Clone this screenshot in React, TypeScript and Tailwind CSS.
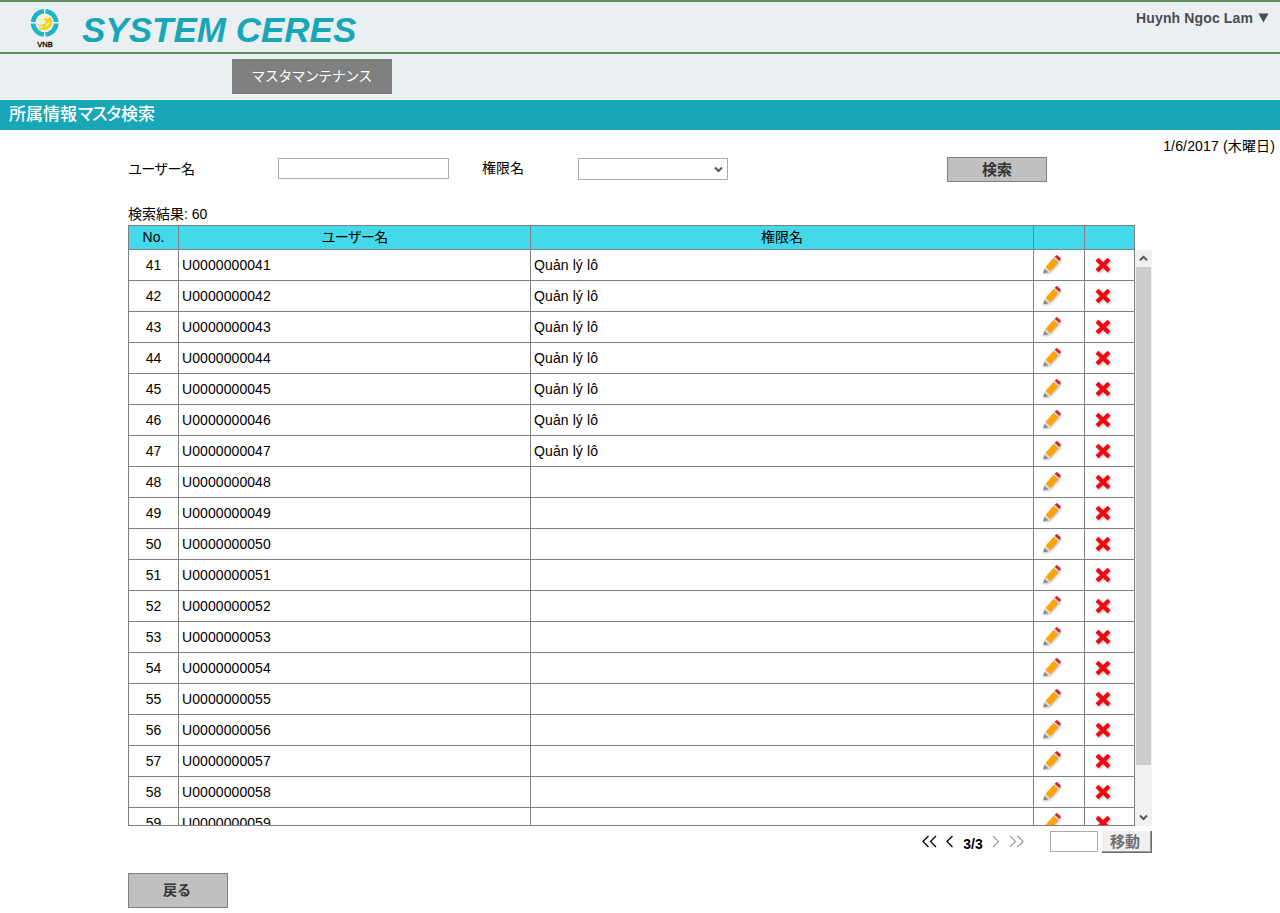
import React from "react";

const roleRows = 7;
const rows = Array.from({ length: 19 }, (_, i) => ({
  no: 41 + i,
  user: `U00000000${41 + i}`,
  role: i < roleRows ? "Quản lý lô" : "",
}));

const columns = "grid grid-cols-[51px_352px_503px_51px_50px]";

function Logo() {
  return (
    <svg width="32" height="42" viewBox="0 0 32 42" className="block">
      <circle cx="15.7" cy="15.8" r="11.6" fill="none" stroke="#1cb7c6" strokeWidth="4.6" />
      <path d="M15.7 1v6M15.7 25v6M1 15.8h6M25 15.8h6" stroke="#eaf6f8" strokeWidth="1.5" />
      <path d="M8 15c-.5-4 3-8 7-8 3 0 5 1 6.500 3l-2 1-3-1-2 4-3 2c-2 0-3-.5-3.500-1z" fill="#fdf6c4" />
      <path d="M7.500 16.500c2 1.500 4 1.500 6 1 2.500-.3 4-2 3-4.200l-2-.6 1.600-1.600 3 .8 1.500-2.200c2.500 2 3.400 5.500 2 8.600-1.300 3-4.500 4.800-8 4.700-3 0-5-1.200-6-3 2.500 1.300 5 1.200 6.500 0-3 0-6-1-7.600-3.500z" fill="#f2d51d" />
      <path d="M17.500 17.500c1-1 2-1.500 3-3-.2 3-2 5-5 5.500z" fill="#fdf6c4" />
      <text x="16" y="40" textAnchor="middle" fontSize="8" fontWeight="400" stroke="#000" strokeWidth="0.3" textLength="15.5" lengthAdjust="spacingAndGlyphs" fontFamily="Liberation Sans, sans-serif">VNB</text>
    </svg>
  );
}

function Pencil() {
  return (
    <svg width="22" height="22" viewBox="0 0 22 22" className="block drop-shadow-[1px_1px_1px_rgba(0,0,0,0.25)]">
      <path d="M2 19.600 3.500 14.400 7.500 18.200z" fill="#8e8983" />
      <path d="M3.500 14.500 4.600 12.700 9.300 17.200 7.500 18.300z" fill="#e0ddda" />
      <path d="M4.600 12.800 12.600 3.800 17.500 8.300 9.300 17.300z" fill="#ffa30b" />
      <path d="M12.600 3.800 13.700 2.600 18.500 7.100 17.500 8.300z" fill="#e3d5d2" />
      <path d="M13.700 2.700 15 1.400Q15.700 .8 16.500 1.500L19.300 4.100Q20 4.800 19.400 5.600L18.400 7.100z" fill="#d3242f" />
    </svg>
  );
}

function Cross() {
  return (
    <svg width="20" height="20" viewBox="0 0 20 20" className="block drop-shadow-[1px_1px_1px_rgba(0,0,0,0.3)]">
      <path d="M4 4.200 16 15.800M16 4.200 4 15.800" stroke="#ef0711" strokeWidth="4.200" />
    </svg>
  );
}

function Chevron({ up = false }: { up?: boolean }) {
  return (
    <svg width="9" height="7" viewBox="0 0 9 7" className="block">
      <path d={up ? "M1 5.3 4.5 1.8 8 5.3" : "M1 1.5 4.5 5 8 1.5"} fill="none" stroke="#555" strokeWidth="2" />
    </svg>
  );
}

function Arrow({ double = false, right = false, muted = false }: { double?: boolean; right?: boolean; muted?: boolean }) {
  const single = right ? "M1 1 6.5 6.5 1 12" : "M6.5 1 1 6.5 6.5 12";
  const second = right ? "M8.5 1 14 6.5 8.5 12" : "M14 1 8.5 6.5 14 12";
  return (
    <svg width={double ? 16 : 8} height="13" viewBox={double ? "0 0 16 13" : "0 0 8 13"} className="block">
      <path d={double ? single + second : single} fill="none" stroke={muted ? "#a0a0a0" : "#000"} strokeWidth="1.3" />
    </svg>
  );
}

export default function App() {
  return (
    <div className="h-[913px] w-[1280px] overflow-hidden bg-white font-['Liberation_Sans','Noto_Sans_CJK_JP',sans-serif] text-[14px] leading-[20px] text-black">
      <header className="flex h-[54px] justify-between border-y-2 border-[#648c5a] bg-[#eaeff2]">
        <div className="flex">
          <div className="ml-[29px] mt-[5px] w-[53px]">
            <Logo />
          </div>
          <h1 className="mt-[8px] whitespace-nowrap text-[35px] font-bold italic leading-[40px] text-[#19a6b7]">SYSTEM CERES</h1>
        </div>
        <div className="mr-[11px] mt-[6px] flex text-[#4c4c4c]">
          <span className="whitespace-nowrap font-bold tracking-[0.13px]">Huynh Ngoc Lam</span>
          <svg width="11" height="10" viewBox="0 0 11 10" className="ml-[5px] mt-[5px]">
            <path d="M0.5 0.5h10L5.500 9.500z" fill="#4c4c4c" />
          </svg>
        </div>
      </header>

      <nav className="h-[45px] bg-[#eaeff2] pl-[232px] pt-[5px]">
        <button className="block h-[35px] w-[160px] whitespace-nowrap bg-[#808080] pr-[1px] text-[14px] leading-[35px] tracking-[-0.6px] text-white">マスタマンテナンス</button>
      </nav>
      <h2 className="mt-px h-[30px] bg-[#19a6b7] pl-[9px] text-[17px] font-medium leading-[30px] text-white">
        <span>所属情報</span>
        <span className="tracking-[-2.7px]">マスタ</span>
        <span className="ml-[1px]">検索</span>
      </h2>

      <div className="flex h-[27px] justify-end pr-[5px] pt-[6px]">
        <span className="whitespace-nowrap tracking-[0.15px]">1/6/2017 (木曜日)</span>
      </div>

      <main className="ml-[128px] w-[1024px]">
        <form className="flex h-[25px] items-start" onSubmit={(e) => e.preventDefault()}>
          <label className="mt-[2px] w-[150px] whitespace-nowrap tracking-[-0.7px]">ユーザー名</label>
          <input className="mt-px h-[21px] w-[171px] border border-[#abadb3] bg-white" />
          <label className="ml-[33px] mt-[1px] w-[96px]">権限名</label>
          <div className="mt-px flex h-[22px] w-[150px] items-center justify-end border border-[#abadb3] pr-[4px] pt-[1px]">
            <Chevron />
          </div>
          <button className="ml-[219px] h-[25px] w-[100px] border border-[#808080] bg-[#c0c0c0] text-[15px] font-bold leading-[23px] text-[#333]">検索</button>
        </form>

        <p className="mt-[22px] h-[21px] whitespace-nowrap">検索結果: 60</p>

        <div className={`${columns} h-[25px] w-[1007px] border-t border-[#808080] bg-[#43d9e8] text-center leading-[23px]`}>
          <div className="border-x border-b border-[#808080]">No.</div>
          <div className="border-b border-r border-[#808080] tracking-[-0.7px]">ユーザー名</div>
          <div className="border-b border-r border-[#808080]">権限名</div>
          <div className="border-b border-r border-[#808080]" />
          <div className="border-b border-r border-[#808080]" />
        </div>

        <div className="flex h-[576px]">
          <div className="h-[576px] w-[1007px] overflow-hidden border-b border-[#808080]">
            {rows.map((row) => (
              <div key={row.no} className={`${columns} h-[31px] leading-[30px]`}>
                <div className="border-x border-b border-[#808080] text-center">{row.no}</div>
                <div className="border-b border-r border-[#808080] pl-[3px] tracking-[0.08px]">{row.user}</div>
                <div className="border-b border-r border-[#808080] pl-[3px] tracking-[0.1px]">{row.role}</div>
                <div className="border-b border-r border-[#808080] pl-[7px] pt-[4px]">
                  <Pencil />
                </div>
                <div className="border-b border-r border-[#808080] pl-[8px] pt-[5px]">
                  <Cross />
                </div>
              </div>
            ))}
          </div>
          <div className="flex w-[17px] flex-col items-center bg-[#f0f0f0]">
            <div className="flex h-[17px] items-center">
              <Chevron up />
            </div>
            <div className="h-[498px] w-[15px] bg-[#cdcdcd]" />
            <div className="mt-auto flex h-[17px] items-center">
              <Chevron />
            </div>
          </div>
        </div>

        <div className="flex h-[47px] items-start justify-end pt-[5px]">
          <div className="mr-[25px] mt-[4px] flex items-start">
            <Arrow double />
            <span className="ml-[8px]">
              <Arrow />
            </span>
            <span className="ml-[9px] mt-[-1px] text-[14px] font-bold leading-[20px] tracking-[0.1px]">3/3</span>
            <span className="ml-[9px]">
              <Arrow right muted />
            </span>
            <span className="ml-[9px]">
              <Arrow double right muted />
            </span>
          </div>
          <input className="h-[21px] w-[48px] border border-[#abadb3] bg-white" />
          <button className="ml-[4px] h-[22px] w-[50px] border-b border-r border-[#696969] bg-[#f0f0f0] pr-[3px] text-[15px] font-bold leading-[22px] text-[#6d6d6d] shadow-[inset_-1px_-1px_0_#a0a0a0]">移動</button>
        </div>

        <button className="block h-[35px] w-[100px] border border-[#808080] bg-[#c0c0c0] pr-[2px] text-[14px] font-bold leading-[33px] text-[#333]">戻る</button>
      </main>
    </div>
  );
}
